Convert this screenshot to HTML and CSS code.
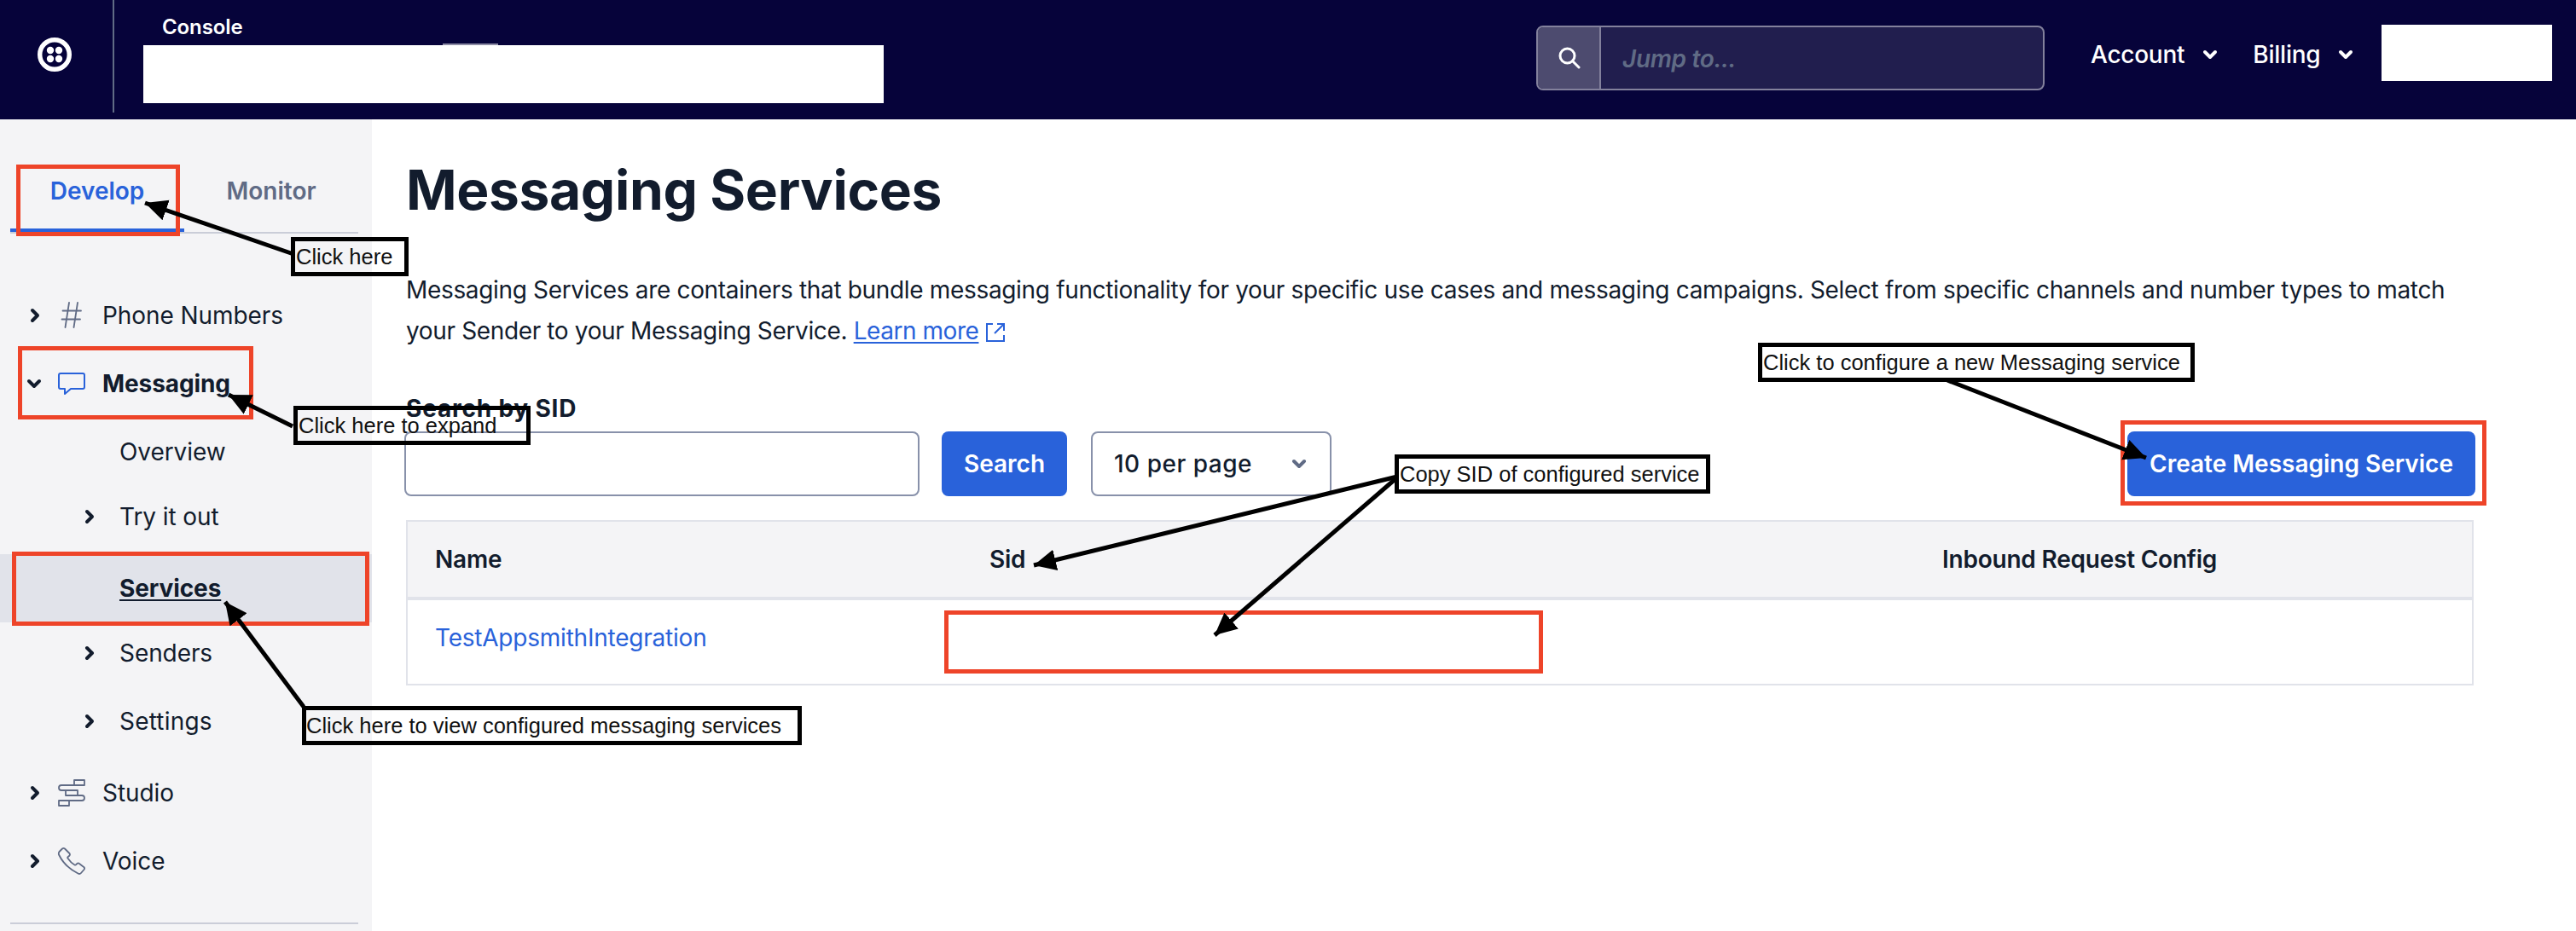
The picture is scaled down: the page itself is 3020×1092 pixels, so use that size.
FILE: index.html
```html
<!DOCTYPE html>
<html lang="en">
<head>
<meta charset="utf-8">
<title>Messaging Services</title>
<link rel="stylesheet" href="styles.css">
</head>
<body>
<svg class="defs" aria-hidden="true">
  <symbol id="right" viewBox="0 0 16 20"><path d="M5 4 11 10 5 16" fill="none" stroke="currentColor" stroke-width="4" stroke-linecap="round" stroke-linejoin="round"/></symbol>
  <symbol id="down" viewBox="0 0 20 16"><path d="M4 5 10 11 16 5" fill="none" stroke="currentColor" stroke-width="4" stroke-linecap="round" stroke-linejoin="round"/></symbol>
</svg>
<header class="topbar">
  <div class="brand">
    <svg width="40" height="40" viewBox="0 0 40 40"><circle cx="20" cy="20" r="17.300" fill="none" stroke="#fff" stroke-width="5.400"/><g fill="#fff"><circle cx="15" cy="15" r="4.200"/><circle cx="25" cy="15" r="4.200"/><circle cx="15" cy="25" r="4.200"/><circle cx="25" cy="25" r="4.200"/></g></svg>
  </div>
  <div class="project">
    <span class="console">Console</span>
    <div class="project-box"></div>
  </div>
  <div class="jump">
    <div class="jump-icon"><svg width="26" height="26" viewBox="0 0 26 26" fill="none" stroke="#fff" stroke-width="3"><circle cx="10.500" cy="10.500" r="8.500"/><path d="M16.500 16.500 24 24" stroke-linecap="round"/></svg></div>
    <div class="jump-field"><span>Jump to...</span></div>
  </div>
  <div class="menus">
    <div class="menu"><span>Account</span><svg width="20" height="16"><use href="#down"/></svg></div>
    <div class="menu"><span>Billing</span><svg width="20" height="16"><use href="#down"/></svg></div>
  </div>
  <div class="user-box"></div>
</header>
<div class="body">
  <nav class="sidebar">
    <div class="tabs"><div class="tab active"><span>Develop</span></div><div class="tab"><span>Monitor</span></div></div>
    <div class="tree">
      <div class="row"><svg class="chev" width="16" height="20"><use href="#right"/></svg>
        <svg class="icon" width="36" height="36" viewBox="0 0 36 36" fill="none" stroke="#606b85" stroke-width="1.800" stroke-linecap="round"><path d="M15 3 10.500 32M25 3 20.500 32M7.500 12.500H29M6.500 22.500H28"/></svg><span>Phone Numbers</span></div>
      <div class="row open"><svg class="chev" width="20" height="16"><use href="#down"/></svg>
        <svg class="icon" width="36" height="36" viewBox="0 0 36 36" fill="none" stroke="#2962da" stroke-width="2" stroke-linejoin="round"><path d="M5 6H31Q33 6 33 8V22Q33 24 31 24H17L10 30V24H5Q3 24 3 22V8Q3 6 5 6Z"/></svg><span>Messaging</span></div>
      <div class="row sub"><span>Overview</span></div>
      <div class="row sub short"><svg class="chev" width="16" height="20"><use href="#right"/></svg><span>Try it out</span></div>
      <div class="row sub current"><span>Services</span></div>
      <div class="row sub short"><svg class="chev" width="16" height="20"><use href="#right"/></svg><span>Senders</span></div>
      <div class="row sub short"><svg class="chev" width="16" height="20"><use href="#right"/></svg><span class="wide">Settings</span></div>
      <div class="row"><svg class="chev" width="16" height="20"><use href="#right"/></svg>
        <svg class="icon" width="36" height="36" viewBox="0 0 36 36" fill="none" stroke="#606b85" stroke-width="1.800" stroke-linejoin="round"><path d="M21 3H33V9H21ZM11 15H25V21H11ZM3 27H15V33H3ZM21 9H6A3 3 0 0 0 6 15H11M25 21H30A3 3 0 0 1 30 27H15"/></svg><span>Studio</span></div>
      <div class="row"><svg class="chev" width="16" height="20"><use href="#right"/></svg>
        <svg class="icon" width="36" height="36" viewBox="0 0 36 36" fill="none" stroke="#606b85" stroke-width="1.800" stroke-linejoin="round"><path d="M7 3.500Q8.500 2.300 10 3.500L15.500 9Q16.500 10.500 15.300 11.800L13.800 13Q12.800 13.800 13.500 14.800Q17 20 21.500 22.500Q22.500 23 23.300 22L24.500 20.800Q25.800 20 27 21L32.500 25.200Q33.700 26.500 32.500 28L29 32Q27.500 33.700 25.500 32.500C16.500 28 8 20.500 3.300 11Q2.200 9 3.500 7Z"/></svg><span>Voice</span></div>
    </div>
    <div class="rule"></div>
  </nav>
  <main class="main">
    <h1><span>Messaging Services</span></h1>
    <p class="intro"><span>Messaging Services are containers that bundle messaging functionality for your specific use cases and messaging campaigns. Select from specific channels and number types to match</span><br><span class="line2">your Sender to your Messaging Service.</span> <a class="learn">Learn more</a><svg class="ext" width="24" height="24" viewBox="0 0 24 24" fill="none" stroke="#2962da" stroke-width="2"><path d="M9 2H2V22H22V15M14 2H22V10M21.500 2.500 11 13"/></svg></p>
    <label class="label"><span>Search by SID</span></label>
    <div class="controls">
      <div class="input"></div>
      <div class="btn search"><span>Search</span></div>
      <div class="select"><span>10 per page</span><svg width="20" height="16"><use href="#down"/></svg></div>
      <div class="btn create"><span>Create Messaging Service</span></div>
    </div>
    <div class="table">
      <div class="tr head"><span>Name</span><span>Sid</span><span>Inbound Request Config</span></div>
      <div class="tr"><a class="svc">TestAppsmithIntegration</a></div>
    </div>
  </main>
</div>
<div class="notes">
  <div class="hl hl-develop"></div><div class="hl hl-messaging"></div><div class="hl hl-services"></div><div class="hl hl-sid"></div><div class="hl hl-create"></div>
  <svg class="arrows" width="3020" height="1092">
    <defs><marker id="tip" markerUnits="userSpaceOnUse" markerWidth="28" markerHeight="28" refX="26" refY="13" orient="auto"><path d="M0 0.500 26 13 0 25.500Z"/></marker></defs>
    <g stroke="#000" stroke-width="5">
      <path d="M344 298 170 238" marker-end="url(#tip)"/><path d="M343 500 268 463" marker-end="url(#tip)"/><path d="M356 829 264 706" marker-end="url(#tip)"/><path d="M1638 559 1212 663" marker-end="url(#tip)"/><path d="M1638 560 1424 745" marker-end="url(#tip)"/><path d="M2283 446 2516 537" marker-end="url(#tip)"/>
    </g>
  </svg>
  <div class="note n-click"><span>Click here</span></div>
  <div class="note n-expand"><span>Click here to expand</span></div>
  <div class="note n-view"><span>Click here to view configured messaging services</span></div>
  <div class="note n-copy"><span>Copy SID of configured service</span></div>
  <div class="note n-new"><span>Click to configure a new Messaging service</span></div>
</div>
</body>
</html>
```
FILE: styles.css
```css
* { box-sizing: border-box; }
body { margin: 0; width: 3020px; height: 1092px; overflow: hidden; position: relative; background: #fff; color: #121c2d; font: 28px/48px Inter, "Liberation Sans", sans-serif; }
.defs { position: absolute; width: 0; height: 0; }
svg { display: block; flex: none; }
span, a { white-space: nowrap; }

.topbar { height: 140px; background: #06033a; color: #fff; display: flex; align-items: flex-start; }
.brand { width: 134px; height: 132px; border-right: 2px solid #606b85; padding: 44px 0 0 44px; }
.project { margin-left: 34px; width: 868px; padding-top: 13px; }
.console { display: block; width: max-content; margin-left: 22px; font-size: 24px; line-height: 38px; font-weight: 600; letter-spacing: -.1px; }
.project-box { height: 70px; background: linear-gradient(#8d8ca5, #8d8ca5) 351px 0 / 65px 2px no-repeat, linear-gradient(#fff, #fff) 0 2px / 100% 68px no-repeat; }
.jump { margin: 30px 0 0 765px; width: 596px; height: 76px; border: 2px solid #83819c; border-radius: 8px; background: #211e4e; display: flex; overflow: hidden; }
.jump-icon { width: 74px; border-right: 2px solid #83819c; background: #4d4b6f; display: flex; align-items: center; justify-content: center; padding-left: 2px; }
.jump-field { padding: 13px 0 0 25px; font-style: italic; font-weight: 600; letter-spacing: -.35px; color: #606b85; }
.menus { display: flex; gap: 40px; margin: 40px 0 0 54px; font-weight: 500; letter-spacing: -.25px; }
.menu { display: flex; align-items: center; gap: 20px; }
.user-box { margin: 29px 28px 0 auto; width: 200px; height: 66px; background: #fff; }

.body { display: flex; height: 952px; }
.sidebar { flex: none; width: 436px; background: #f4f4f6; padding-top: 40px; }
.tabs { display: flex; margin: 0 16px 0 12px; border-bottom: 2px solid #cacdd8; }
.tab { flex: 1; height: 92px; display: flex; align-items: center; justify-content: center; padding-bottom: 4px; font-weight: 600; color: #606b85; }
.tab.active { color: #2962da; border-bottom: 4px solid #2962da; padding: 0; }
.tree { margin-top: 56px; }
.row { height: 80px; display: flex; align-items: center; padding-left: 33px; letter-spacing: -.08px; }
.chev { width: 16px; margin-right: 17px; }
.icon { margin-right: 18px; }
.row.open { padding-left: 30px; font-weight: 700; letter-spacing: -.1px; }
.open .chev { width: 20px; margin-right: 16px; }
.row.sub { padding-left: 140px; }
.row.sub.short { height: 72px; padding-left: 97px; margin-bottom: 8px; }
.short .chev { margin-right: 27px; }
.wide { letter-spacing: .2px; }
.row.current { background: #e1e3ea; font-weight: 700; letter-spacing: -.1px; }
.current span { text-decoration: underline; text-decoration-thickness: 2px; text-underline-offset: 3px; }
.rule { margin: 32px 16px 0 12px; height: 2px; background: #cacdd8; }

.main { flex: 1; min-width: 0; padding: 43px 118px 0 40px; }
h1 { margin: 0 0 53px; font-size: 64px; line-height: 80px; font-weight: 700; letter-spacing: -.35px; }
.intro { margin: 0; letter-spacing: -.335px; }
.line2 { letter-spacing: -.36px; }
a { color: #2962da; }
.learn { text-decoration: underline; text-decoration-thickness: 2px; text-underline-offset: 3px; letter-spacing: -.45px; }
.ext { display: inline-block; margin-left: 8px; vertical-align: -4px; }
.label { display: block; margin-top: 47px; line-height: 40px; font-weight: 700; letter-spacing: .8px; }
.controls { display: flex; margin: 7px 0 28px -2px; height: 76px; }
.input { width: 604px; border: 2px solid #8891aa; border-radius: 8px; }
.btn { display: flex; align-items: center; justify-content: center; background: #2962da; color: #fff; border-radius: 8px; font-weight: 600; }
.search { margin-left: 26px; width: 147px; }
.select { margin-left: 28px; width: 282px; border: 2px solid #8891aa; border-radius: 8px; display: flex; align-items: center; padding: 0 26px 0 25px; justify-content: space-between; font-weight: 500; letter-spacing: .5px; }
.select svg { color: #606b85; }
.create { margin-left: auto; width: 408px; }
.table { width: 2424px; border: 2px solid #e1e3ea; }
.tr { display: grid; grid-template-columns: 650px 1117px 1fr; height: 98px; padding: 0 32px; align-items: center; letter-spacing: -.22px; }
.tr.head { height: 92px; background: #f4f4f6; border-bottom: 4px solid #e1e3ea; font-weight: 600; }
.svc { position: relative; top: -5px; }

.hl { position: absolute; border: 5px solid #ee4429; }
.hl-develop { left: 19px; top: 193px; width: 192px; height: 84px; }
.hl-messaging { left: 21px; top: 406px; width: 276px; height: 86px; }
.hl-services { left: 14px; top: 647px; width: 419px; height: 87px; }
.hl-sid { left: 1107px; top: 716px; width: 702px; height: 74px; }
.hl-create { left: 2486px; top: 493px; width: 429px; height: 100px; }
.arrows { position: absolute; left: 0; top: 0; }
.note { position: absolute; height: 46px; border: 5px solid #000; padding-left: 1px; color: #111; font: 25.5px/37px "Liberation Sans", Arial, sans-serif; }
.n-click { left: 341px; top: 278px; width: 138px; }
.n-expand { left: 344px; top: 476px; width: 278px; }
.n-view { left: 354px; top: 828px; width: 586px; padding-left: 0; }
.n-copy { left: 1635px; top: 533px; width: 370px; }
.n-new { left: 2061px; top: 402px; width: 512px; }
```
